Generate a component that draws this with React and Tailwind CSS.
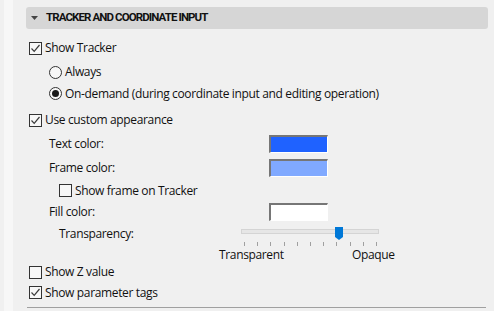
import React from "react";

const font = { fontFamily: '"Open Sans", "Noto Sans", sans-serif' };
const headFont = { fontFamily: 'Roboto, "Open Sans", sans-serif' };

function Check({ checked }) {
  return (
    <div className="w-[13px] h-[13px] border border-[#333333] bg-[#f7f7f7] shrink-0 flex items-center justify-center">
      {checked && (
        <svg width="11" height="11" viewBox="0 0 11 11">
          <path d="M1.5 5.5 L4.2 8.3 L9.5 2" fill="none" stroke="#3a3a3a" strokeWidth="1.2" />
        </svg>
      )}
    </div>
  );
}

function Radio({ checked }) {
  return (
    <div className="w-[13px] h-[13px] rounded-full border border-[#333333] bg-[#f7f7f7] shrink-0 flex items-center justify-center">
      {checked && <div className="w-[7px] h-[7px] rounded-full bg-[#1a1a1a]" />}
    </div>
  );
}

function Swatch({ color }) {
  return (
    <div
      className={`w-[59px] h-[18px] border-t-2 border-l-2 border-r border-b border-t-[#767676] border-l-[#767676] border-r-white border-b-white ${color}`}
    />
  );
}

export default function App() {
  const ticks = [0, 1, 2, 3, 4, 5, 6, 7, 8, 9, 10];
  return (
    <div className="w-[494px] h-[311px] bg-[#f0f0f0] flex overflow-hidden text-[12px] tracking-[-0.35px] text-[#111]" style={font}>
      <div className="w-[4px] bg-[#f0f0f0]" />
      <div className="w-[9px] bg-[#f7f7f7]" />
      <div className="flex-1 flex flex-col pl-[13px]">
        <div className="mt-[7px] h-[22px] w-[462px] rounded-[3px] bg-[#d6d6d6] flex items-center">
          <svg width="8" height="6" viewBox="0 0 8 6" className="ml-[5px]">
            <path d="M0 1 L7 1 L3.5 5 Z" fill="#444" />
          </svg>
          <span className="ml-[7px] font-bold text-[11.5px] tracking-[-0.9px] text-[#111]" style={headFont}>
            TRACKER AND COORDINATE INPUT
          </span>
        </div>

        <div className="mt-[8px] h-[22px] flex items-center pl-[3px] gap-[3px]">
          <Check checked />
          <span>Show Tracker</span>
        </div>
        <div className="mt-[2px] h-[22px] flex items-center pl-[23px] gap-[3px]">
          <Radio />
          <span>Always</span>
        </div>
        <div className="h-[21px] flex items-center pl-[23px] gap-[3px]">
          <Radio checked />
          <span>On-demand (during coordinate input and editing operation)</span>
        </div>
        <div className="mt-[5px] h-[22px] flex items-center pl-[3px] gap-[3px]">
          <Check checked />
          <span>Use custom appearance</span>
        </div>
        <div className="mt-[2px] h-[21px] flex items-center pl-[23px]">
          <span className="w-[220px]">Text color:</span>
          <Swatch color="bg-[#1f62ff]" />
        </div>
        <div className="mt-[3px] h-[22px] flex items-center pl-[23px]">
          <span className="w-[220px]">Frame color:</span>
          <Swatch color="bg-[#80a9ff]" />
        </div>
        <div className="mt-[1px] h-[21px] flex items-center pl-[33px] gap-[3px]">
          <Check />
          <span>Show frame on Tracker</span>
        </div>
        <div className="h-[21px] flex items-center pl-[23px]">
          <span className="w-[220px]">Fill color:</span>
          <Swatch color="bg-white" />
        </div>
        <div className="mt-[1px] h-[22px] flex items-start pl-[33px]">
          <span className="w-[182px] h-[22px] flex items-center">Transparency:</span>
          <div className="relative w-[140px] pt-[6px]">
            <div className="h-[5px] w-[138px] bg-[#e6e6e6] border border-[#d4d4d4]" />
            <div className="mt-[8px] flex justify-between w-[133px] ml-[3px]">
              {ticks.map((t) => (
                <div key={t} className="w-px h-[4px] bg-[#a0a0a0]" />
              ))}
            </div>
            <div className="absolute left-[94px] top-[4px] flex flex-col items-center">
              <div className="w-[8px] h-[10px] bg-[#0078d7]" />
              <div className="w-0 h-0 border-l-[4px] border-r-[4px] border-t-[3px] border-l-transparent border-r-transparent border-t-[#0078d7]" />
            </div>
          </div>
        </div>
        <div className="mt-[2px] h-[16px] flex items-center pl-[193px]">
          <span className="w-[133px]">Transparent</span>
          <span>Opaque</span>
        </div>
        <div className="h-[18px] flex items-center pl-[3px] gap-[3px]">
          <Check />
          <span>Show Z value</span>
        </div>
        <div className="mt-px h-[21px] flex items-center pl-[3px] gap-[3px]">
          <Check checked />
          <span>Show parameter tags</span>
        </div>
        <div className="mt-[4px] h-px w-[459px] ml-px bg-[#a0a0a0]" />
      </div>
    </div>
  );
}
